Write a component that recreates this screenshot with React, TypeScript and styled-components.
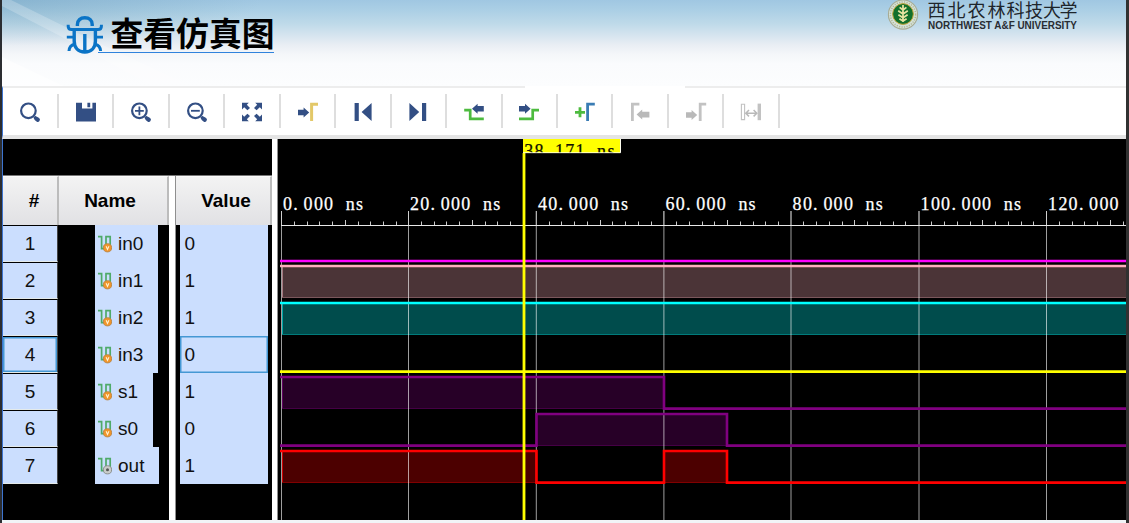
import React from 'react';
import styled, { createGlobalStyle } from 'styled-components';

const Global = createGlobalStyle`
  * { box-sizing: border-box; }
  body { margin: 0; background: #fff; font-family: "Liberation Sans", Arial, sans-serif; overflow: hidden; }
  svg { display: block; flex: none; }
`;

const Page = styled.div`
  width: 1129px;
  height: 523px;
  display: flex;
  flex-direction: column;
  background: #f1f4f7;
  border-left: 2px solid #2b2d31;
  border-right: 3px solid #313131;
  overflow: hidden;
`;

const Banner = styled.header`
  height: 86px;
  flex: none;
  display: flex;
  justify-content: space-between;
  padding: 0 47px 0 64px;
  background:
    radial-gradient(ellipse 260px 46px at 0 0, rgba(80,135,165,0.3), rgba(80,135,165,0)),
    linear-gradient(180deg, #a0c7e2 0, #abcfe5 10px, #bfdae9 24px, #d7e5ef 36px, #e9eef4 45px, #f4f6f9 54px, #fafbfd 64px, #fcfdfe 86px);
  position: relative;
`;

const Streaks = styled.svg`
  position: absolute;
  left: 0;
  top: 0;
`;

const TitleGroup = styled.div`
  display: flex;
  position: relative;
  padding-top: 15px;
`;

const Title = styled.h1`
  margin: 0;
  height: 38px;
  width: 176px;
  margin-left: -6px;
  padding-left: 12.5px;
  border-bottom: 1px solid #2f82dc;
  font: 700 32.8px/33px "Noto Sans CJK SC", sans-serif;
  color: #000;
  white-space: nowrap;
`;

const Brand = styled.div`
  display: flex;
  gap: 8px;
  position: relative;
`;

const ToolStrip = styled.div`
  height: 53px;
  flex: none;
  display: flex;
  padding: 6px 0 0 0.6px;
  background: #fff;
  border-top: 2px solid #ededed;
  border-left: 1px solid #3d74cf;
  border-bottom: 4px solid #e4e4e4;
  position: relative;
`;

const Patch = styled.div`
  position: absolute;
  left: 522px;
  top: -2px;
  width: 160px;
  height: 4px;
  background: #fff;
`;

const ToolButton = styled.div`
  width: 55.45px;
  height: 34px;
  flex: none;
  display: flex;
  justify-content: center;
  padding-top: 6px;
  border-right: 2px solid #dedede;
`;

const Workspace = styled.main`
  height: 381px;
  flex: none;
  display: flex;
  background: #000;
  border-left: 1px solid #3d74cf;
`;

const SignalArea = styled.section`
  width: 269px;
  flex: none;
  display: flex;
  flex-direction: column;
`;

const Blank = styled.div`
  height: 37px;
  flex: none;
  border-bottom: 1px solid #777;
`;

const Columns = styled.div`
  flex: 1;
  display: flex;
`;

const Column = styled.div<{ $w: number }>`
  width: ${p => p.$w}px;
  display: flex;
  flex-direction: column;
`;

const Head = styled.div<{ $left?: number; $right?: number }>`
  height: 49px;
  flex: none;
  display: flex;
  align-items: center;
  justify-content: center;
  padding-left: ${p => p.$left ?? 0}px;
  padding-right: ${p => p.$right ?? 0}px;
  background: linear-gradient(#f3f3f3, #e1e1e4);
  border-top: 1px solid #fafafa;
  border-right: 2px solid #bcbcbc;
  font-weight: 700;
  font-size: 19px;
  color: #000;
`;

const Divider = styled.div<{ $w: number }>`
  width: ${p => p.$w}px;
  flex: none;
  background: #fff;
  border-right: 1px solid #8f8f8f;
`;

const IndexCell = styled.div<{ $on?: boolean }>`
  height: 37px;
  flex: none;
  display: flex;
  align-items: center;
  justify-content: center;
  padding-top: 1px;
  margin-right: 1px;
  background: #cbdefe;
  border-top: 1px solid #000;
  border-bottom: 1px solid #e4eaea;
  border-right: 1px solid #444;
  box-shadow: ${p => (p.$on ? 'inset 0 0 0 1.5px #4598d4' : 'none')};
  font-size: 19px;
  color: #111;
`;

const NameCell = styled.div<{ $w: number }>`
  width: ${p => p.$w}px;
  height: 37px;
  flex: none;
  margin-left: 36px;
  display: flex;
  align-items: center;
  gap: 6px;
  padding-left: 3px;
  background: #cbdefe;
  font-size: 19px;
  color: #111;
`;

const ValueCell = styled.div<{ $on?: boolean }>`
  height: 37px;
  flex: none;
  display: flex;
  align-items: center;
  margin: 0 4px;
  padding-left: 4.5px;
  background: #cbdefe;
  box-shadow: ${p => (p.$on ? 'inset 0 0 0 1.5px #4598d4' : 'none')};
  font-size: 19px;
  color: #111;
`;

const NAVY = '#334f84';
const GREEN = '#4dbb3f';
const GREY = '#b9b9b9';

const arrow = (tip: number, tail: number, y: number, fill: string) => {
  const d = tip > tail ? -1 : 1;
  const neck = tip + d * 5.6;
  return <path fill={fill} d={`M${tip} ${y}L${neck} ${y - 5}V${y - 2.8}H${tail}V${y + 2.8}H${neck}V${y + 5}Z`} />;
};

const lens = (
  <>
    <circle cx="10.4" cy="10.8" r="7.3" fill="none" stroke={NAVY} strokeWidth="2.2" />
    <path d="M16.3 16.7L17.8 18.2" stroke={NAVY} strokeWidth="3" />
    <path d="M18.2 18.6L19.8 19.8" stroke={NAVY} strokeWidth="4.2" strokeLinecap="round" />
  </>
);

const corner = (
  <path fill={NAVY} d="M2 2.7H8.8L6.8 4.7L10 7.9L7.4 10.3L4.2 7.2L2 9.4Z" />
);

const icons: React.ReactNode[] = [
  lens,
  <path fill={NAVY} d="M2 2.7H8V8.6H18.4V2.7H22V21.4H2ZM13.4 2.7H16.2V7.2H13.4Z" />,
  <>{lens}<path d="M6 10.8H14.8M10.4 6.4V15.2" stroke={NAVY} strokeWidth="1.8" /></>,
  <>{lens}<path d="M6 10.8H14.8" stroke={NAVY} strokeWidth="1.8" /></>,
  <>
    {corner}
    <g transform="translate(24 0) scale(-1 1)">{corner}</g>
    <g transform="translate(0 24) scale(1 -1)">{corner}</g>
    <g transform="translate(24 24) scale(-1 -1)">{corner}</g>
  </>,
  <>{arrow(13.2, 2, 12.5, NAVY)}<path d="M15.6 21V4.2H22" fill="none" stroke="#e3c868" strokeWidth="3" /></>,
  <path fill={NAVY} d="M3.6 3H7.8V21H3.6ZM20.6 3V21L10.6 12Z" />,
  <path fill={NAVY} d="M16 3H20.2V21H16ZM3.4 3V21L13.2 12Z" />,
  <>{arrow(10, 21.8, 8.8, NAVY)}<path d="M2.2 10.2H8.2V18.8H21.8" fill="none" stroke={GREEN} strokeWidth="2.7" /></>,
  <>{arrow(13.6, 2, 8.8, NAVY)}<path d="M2 18.8H15.7V10.2H22" fill="none" stroke={GREEN} strokeWidth="2.7" /></>,
  <><path d="M2 12.3H12M7 7.3V17.3" stroke={GREEN} strokeWidth="2.8" /><path d="M14.6 21V4.1H21.8" fill="none" stroke="#3a7cb4" strokeWidth="2.8" /></>,
  <>{arrow(8.6, 21.4, 14.6, GREY)}<path d="M4.4 21V4.2H11.4" fill="none" stroke="#c2c2c2" strokeWidth="2.8" /></>,
  <>{arrow(13.2, 2, 15, GREY)}<path d="M16.2 21V4.2H22.2" fill="none" stroke="#c2c2c2" strokeWidth="2.8" /></>,
  <>
    <path d="M2.4 4.2H5.6V19.6H2.4Z" fill="none" stroke="#c2c2c2" strokeWidth="1.1" />
    <path d="M18.6 3.6H22V20.2H18.6Z" fill="#c2c2c2" />
    <path d="M7 13.2H17.6M10 10L6.8 13.2L10 16.4M14.6 10L17.8 13.2L14.6 16.4" fill="none" stroke={GREY} strokeWidth="1.5" />
  </>,
];

const BugIcon = () => (
  <svg width="38" height="40" viewBox="0 0 38 40" fill="none" stroke="#0b74c6" strokeWidth="3.4">
    <path d="M11.4 11V9.6C11.4 5.4 14.4 2.8 18.8 2.8C23.2 2.8 26.2 5.4 26.2 9.6V11" />
    <path d="M2.2 9.8V11.2C2.2 13.4 3.4 14.6 5.8 14.6H31.8C34.2 14.6 35.4 13.4 35.4 11.2V9.8" strokeWidth="3" />
    <path d="M8.2 15V26C8.2 33 12.4 37 18.8 37C25.2 37 29.4 33 29.4 26V15" />
    <path d="M18.8 19V37" strokeWidth="3.4" />
    <path d="M.8 22.2H8.6M29 22.2H37" strokeWidth="2.8" />
    <path d="M8.6 29.2C5 30 3.2 32 3 36M29 29.2C32.6 30 34.4 32 34.6 36" strokeWidth="3" />
  </svg>
);

const Emblem = () => (
  <svg width="32" height="32" viewBox="0 0 32 32">
    <circle cx="16" cy="14.5" r="14.6" fill="#d4e2da" stroke="#a7ab94" strokeWidth="1.1" />
    <circle cx="16" cy="14.5" r="12.6" fill="none" stroke="#b4b795" strokeWidth="1.5" strokeDasharray="1.2 1.3" />
    <circle cx="16" cy="14" r="10.4" fill="#12702c" stroke="#c5a63b" strokeWidth="1" />
    <path d="M16 5V22M16 10L12.6 7.4M16 10L19.4 7.4M16 14L11.2 10.8M16 14L20.8 10.8M16 17.8L11.4 14.8M16 17.8L20.6 14.8M16 21L12.4 18.8M16 21L19.6 18.8" fill="none" stroke="#e6e3a0" strokeWidth="1.8" />
  </svg>
);

const Wordmark = () => (
  <svg width="152" height="34" viewBox="0 0 152 34">
    <text x="0.5 20.5 40.5 60.5 79.5 98 116 132.5" y="16.5" fontFamily="'Noto Sans CJK SC', sans-serif" fontWeight="400" fontSize="18" fill="#1e252b">西北农林科技大学</text>
    <text x="1" y="29" textLength="149" lengthAdjust="spacingAndGlyphs" fontFamily="'Liberation Sans', sans-serif" fontWeight="700" fontSize="10.4" fill="#292d33">NORTHWEST A&amp;F UNIVERSITY</text>
  </svg>
);

const SignalIcon = ({ output }: { output?: boolean }) => (
  <svg width="14" height="18" viewBox="0 0 14 18">
    <path d="M0 1.6H3.6V13.6H8V1.6H12.2V10" fill="none" stroke="#4faa69" strokeWidth="1.7" />
    <circle cx="9.5" cy="12.8" r="4.1" fill={output ? '#c9ccca' : '#f1952b'} stroke={output ? '#858985' : '#b98341'} strokeWidth="0.9" />
    {output
      ? <circle cx="9.5" cy="12.8" r="1.5" fill="#555" />
      : <path d="M8.1 11.2L9.5 14.4L10.9 11.2" fill="none" stroke="#fff2cf" strokeWidth="1.1" />}
  </svg>
);

const signals = [
  { name: 'in0', value: '0', w: 63 },
  { name: 'in1', value: '1', w: 63 },
  { name: 'in2', value: '1', w: 63 },
  { name: 'in3', value: '0', w: 63, on: true },
  { name: 's1', value: '1', w: 58 },
  { name: 's0', value: '0', w: 58 },
  { name: 'out', value: '1', w: 64 },
];

const GRID = [3.5, 130.5, 258.3, 385.9, 513, 641, 768.5];
const STEP = 127.5;
const END = 848;

/* One glyph per fixed-width cell, as in a bitmap terminal font. */
const cells = (text: string, x: number) =>
  text.split('').map((c, i) => (x + i * 10.25 + (/[ns]/.test(c) ? 1.1 : 0)).toFixed(1)).join(' ');

const Fill = ({ x, to, y, h, color, edge }: { x: number; to: number; y: number; h: number; color: string; edge: string }) => (
  <>
    <rect x={x} y={y} width={to - x} height={h} fill={color} />
    <rect x={x} y={y + h - 1} width={to - x} height="1" fill={edge} />
  </>
);

const Waves = () => (
  <svg width="848" height="381" viewBox="0 0 848 381">
    <rect width="848" height="381" fill="#000" />
    <Fill x={4} to={END} y={127} h={32} color="#4b3437" edge="#7b575c" />
    <Fill x={4} to={END} y={164} h={32} color="#004c4c" edge="#007b7b" />
    <Fill x={4} to={386} y={238} h={32} color="#270027" edge="#450045" />
    <Fill x={258} to={449} y={275} h={32} color="#270027" edge="#450045" />
    <Fill x={4} to={258} y={312} h={32} color="#4c0000" edge="#800000" />
    <Fill x={386} to={449} y={312} h={32} color="#4c0000" edge="#800000" />
    <path d="M4.5 128V158" stroke="#a87981" />
    <path d="M4.5 165V195" stroke="#00a8a8" />
    <path d="M4.5 239V269" stroke="#600060" />
    <path d="M4.5 313V343" stroke="#d00000" />

    {GRID.map((x, i) => {
      const label = `${i * 20}.000${i < 6 ? ' ns' : ''}`;
      return (
        <g key={i}>
          <path d={`M${x} 72V381`} stroke="#fff" strokeOpacity="0.62" />
          <path d={`M${x} 72V86`} stroke="#fff" strokeOpacity="0.5" />
          {Array.from({ length: 9 }, (_, k) => {
            const tx = Math.floor(x + (k + 1) * STEP / 10) + 0.5;
            return <path key={k} d={`M${tx} ${k === 4 ? 81 : 82.5}V86`} stroke="#ccc" />;
          })}
          <text x={cells(label, x + 1.6)} y="71" fontFamily="'Liberation Serif', serif" fontSize="18" fill="#fff" stroke="#fff" strokeWidth="0.25">{label}</text>
        </g>
      );
    })}
    <path d="M3 86.5H848" stroke="#e8e8e8" />

    <g fill="none" strokeWidth="2.6">
      <path d="M2 122H848" stroke="#f0f" />
      <path d="M2 127H848" stroke="#ffaebd" />
      <path d="M2 164H848" stroke="#0ff" />
      <path d="M2 232.6H848" stroke="#ff0" />
      <path d="M2 238H386V269.6H848" stroke="#800080" />
      <path d="M2 306.6H258.5V275H449V306.6H848" stroke="#800080" />
      <path d="M2 312H258.5V343.6H386V312H449V343.6H848" stroke="#f00" />
    </g>

    <path d="M246 14V381" stroke="#ff0" strokeWidth="2.8" />
    <svg x="245" y="0" width="98" height="14.4">
      <rect width="97" height="14" fill="#ff0" />
      <text x={cells('38.171 ns', 1.3)} y="17.6" fontFamily="'Liberation Serif', serif" fontSize="18" fill="#111100" stroke="#111100" strokeWidth="0.25">38.171 ns</text>
      <path d="M0 13.8H97.5V0" fill="none" stroke="#fffff0" strokeWidth="1" />
    </svg>
  </svg>
);

export default function App() {
  return (
    <>
      <Global />
      <Page>
        <Banner>
          <Streaks width="1124" height="86" viewBox="0 0 1124 86">
            <path d="M0 0H9L92 41L190 86H150L60 37L0 6Z" fill="#fff" fillOpacity=".22" />
            <path d="M0 57L62 86H0Z" fill="#fff" fillOpacity=".5" />
          </Streaks>
          <TitleGroup>
            <BugIcon />
            <Title>查看仿真图</Title>
          </TitleGroup>
          <Brand>
            <Emblem />
            <Wordmark />
          </Brand>
        </Banner>
        <ToolStrip>
          <Patch />
          {icons.map((icon, i) => (
            <ToolButton key={i}>
              <svg width="24" height="24" viewBox="0 0 24 24">{icon}</svg>
            </ToolButton>
          ))}
        </ToolStrip>
        <Workspace>
          <SignalArea>
            <Blank />
            <Columns>
              <Column $w={56}>
                <Head $left={8}>#</Head>
                {signals.map((s, i) => <IndexCell key={s.name} $on={s.on}>{i + 1}</IndexCell>)}
              </Column>
              <Column $w={110}>
                <Head $right={6}>Name</Head>
                {signals.map(s => (
                  <NameCell key={s.name} $w={s.w}>
                    <SignalIcon output={s.name === 'out'} />
                    {s.name}
                  </NameCell>
                ))}
              </Column>
              <Divider $w={7} />
              <Column $w={96}>
                <Head $left={6}>Value</Head>
                {signals.map(s => <ValueCell key={s.name} $on={s.on}>{s.value}</ValueCell>)}
              </Column>
            </Columns>
          </SignalArea>
          <Divider $w={6} />
          <Waves />
        </Workspace>
      </Page>
    </>
  );
}
